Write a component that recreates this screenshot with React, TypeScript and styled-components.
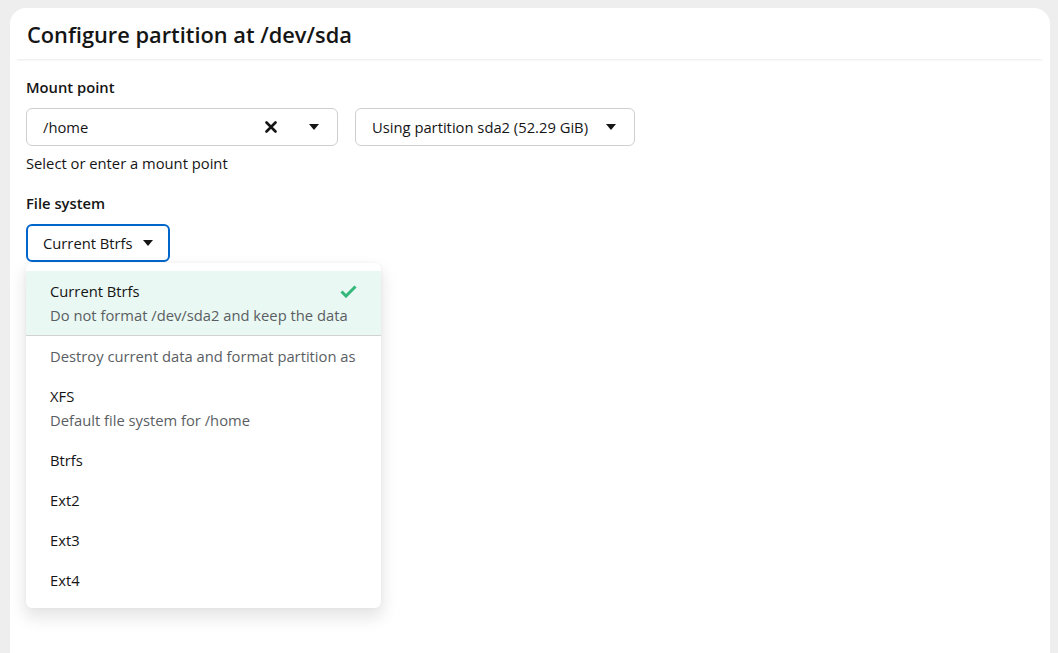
import React from "react";
import styled, { createGlobalStyle } from "styled-components";

const GlobalStyle = createGlobalStyle`
  html, body { margin: 0; padding: 0; height: 100%; }
  body {
    background: #eeeeee;
    font-family: "Open Sans", "Noto Sans", sans-serif;
    color: #151515;
  }
  #root { height: 100%; }
`;

const Page = styled.div`
  height: 100%;
  box-sizing: border-box;
  padding: 8px 8px 0 10px;
  display: flex;
`;

const Card = styled.main`
  flex: 1;
  background: #ffffff;
  border-radius: 16px 16px 0 0;
  display: flex;
  flex-direction: column;
`;

const Header = styled.header`
  margin: 0 7px 0 6px;
  padding: 12px 10px 9px 11px;
  box-shadow: 0 2px 2px -1px rgba(0, 0, 0, 0.09);
`;

const Title = styled.h1`
  margin: 0;
  font-size: 21.8px;
  line-height: 30px;
  font-weight: 600;
`;

const Body = styled.div`
  padding: 16px 16px 0;
  display: flex;
  flex-direction: column;
`;

const Label = styled.div<{ $top?: number }>`
  font-size: 14.75px;
  line-height: 24px;
  font-weight: 600;
  margin-top: ${(p) => p.$top ?? 0}px;
  margin-bottom: 9px;
`;

const Row = styled.div`
  display: flex;
  gap: 17px;
`;

const Field = styled.div<{ $width: number; $active?: boolean }>`
  box-sizing: border-box;
  width: ${(p) => p.$width}px;
  height: 38px;
  display: flex;
  align-items: center;
  padding: 0 ${(p) => (p.$active ? 17 : 18)}px 0 ${(p) => (p.$active ? 15 : 16)}px;
  border: ${(p) => (p.$active ? "2px solid #0066cc" : "1px solid #cfcfcf")};
  border-radius: 6px;
  font-size: 14.75px;
  background: #fff;
  gap: 10px;

  svg { flex-shrink: 0; }
`;

const FieldText = styled.span`
  flex: 1;
  white-space: nowrap;
`;

const Helper = styled.div`
  font-size: 14.75px;
  line-height: 24px;
  margin-top: 5px;
`;

const ClearBtn = styled.span`
  display: inline-flex;
  margin-right: 22px;
`;

const Anchor = styled.div`
  position: relative;
  align-self: flex-start;
`;

const Menu = styled.ul`
  position: absolute;
  top: 39px;
  left: 0;
  width: 355px;
  margin: 0;
  padding: 8px 0;
  list-style: none;
  background: #fff;
  border-radius: 6px;
  box-shadow: 0 8px 16px 2px rgba(0, 0, 0, 0.1), 0 0 4px rgba(0, 0, 0, 0.04);
  font-size: 14.75px;
  line-height: 24px;
  z-index: 10;
`;

const Item = styled.li<{ $selected?: boolean }>`
  padding: 8px 24px;
  background: ${(p) => (p.$selected ? "#e9f8f2" : "transparent")};
  border-bottom: ${(p) => (p.$selected ? "1px solid #d2d2d2" : "none")};
`;

const ItemMain = styled.div`
  display: flex;
  justify-content: space-between;
  align-items: center;
  color: #151515;
`;

const ItemDesc = styled.div`
  color: #5a5e63;
  white-space: nowrap;
`;

const GroupTitle = styled.li`
  padding: 8px 24px;
  color: #5a5e63;
  white-space: nowrap;
`;

const Caret = () => (
  <svg width="10" height="6" viewBox="0 0 10 6" aria-hidden>
    <path d="M0 0h10L5 6z" fill="#151515" />
  </svg>
);

const Times = () => (
  <svg width="12" height="12" viewBox="0 0 12 12" aria-hidden>
    <path d="M1.5 1.5l9 9M10.5 1.5l-9 9" stroke="#151515" strokeWidth="2.6" strokeLinecap="round" />
  </svg>
);

const Check = () => (
  <svg width="17" height="13" viewBox="0 0 17 13" aria-hidden>
    <path d="M1.5 6.5l4.5 4.5L15.5 1.5" stroke="#34b77a" strokeWidth="3" fill="none" strokeLinejoin="miter" />
  </svg>
);

const options = ["Btrfs", "Ext2", "Ext3", "Ext4"];

export default function App() {
  return (
    <>
      <GlobalStyle />
      <Page>
        <Card>
          <Header>
            <Title>Configure partition at /dev/sda</Title>
          </Header>
          <Body>
            <Label>Mount point</Label>
            <Row>
              <Field $width={312}>
                <FieldText>/home</FieldText>
                <ClearBtn>
                  <Times />
                </ClearBtn>
                <Caret />
              </Field>
              <Field $width={280}>
                <FieldText>Using partition sda2 (52.29 GiB)</FieldText>
                <Caret />
              </Field>
            </Row>
            <Helper>Select or enter a mount point</Helper>
            <Label $top={16}>File system</Label>
            <Anchor>
              <Field $width={144} $active>
                <FieldText>Current Btrfs</FieldText>
                <Caret />
              </Field>
              <Menu>
                <Item $selected>
                  <ItemMain>
                    <span>Current Btrfs</span>
                    <Check />
                  </ItemMain>
                  <ItemDesc>Do not format /dev/sda2 and keep the data</ItemDesc>
                </Item>
                <GroupTitle>Destroy current data and format partition as</GroupTitle>
                <Item>
                  <ItemMain>XFS</ItemMain>
                  <ItemDesc>Default file system for /home</ItemDesc>
                </Item>
                {options.map((o) => (
                  <Item key={o}>
                    <ItemMain>{o}</ItemMain>
                  </Item>
                ))}
              </Menu>
            </Anchor>
          </Body>
        </Card>
      </Page>
    </>
  );
}
